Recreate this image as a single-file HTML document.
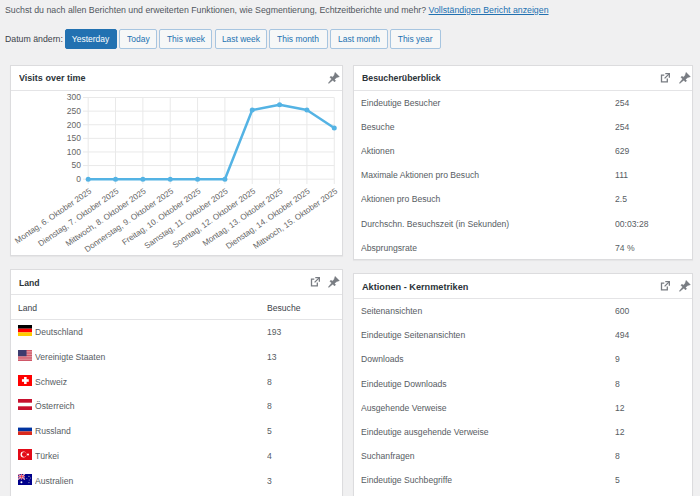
<!DOCTYPE html>
<html><head><meta charset="utf-8"><style>
html,body{margin:0;padding:0;}
body{width:700px;height:496px;overflow:hidden;background:#f0f0f1;font-family:"Liberation Sans",sans-serif;color:#3c434a;position:relative;font-size:8.7px;line-height:10px;}
.a{position:absolute;white-space:nowrap;}
.desc{left:5px;top:4px;color:#50575e;font-size:9.6px;line-height:12px;transform:scaleX(0.914);transform-origin:0 0;}
.desc a{color:#2271b1;text-decoration:underline;}
.lbl{left:5px;top:33.2px;color:#3c434a;font-size:9.6px;line-height:12px;transform:scaleX(0.912);transform-origin:0 0;}
.btn{position:absolute;top:28.7px;height:18.3px;border:1px solid #a7c5e0;border-radius:2px;background:#f6f7f7;color:#2271b1;box-sizing:content-box;text-align:center;line-height:18.3px;white-space:nowrap;}
.btn.p{background:#2271b1;border-color:#2271b1;color:#fff;}
.panel{position:absolute;background:#fff;border:1px solid #dcdcde;box-shadow:0 1px 1px rgba(0,0,0,.04);}
.hd{position:absolute;left:0;right:0;top:0;border-bottom:1px solid #e4e4e6;}
.ttl{position:absolute;white-space:nowrap;font-weight:bold;color:#2c3338;}
.t{position:absolute;white-space:nowrap;color:#575d63;font-size:8.6px;line-height:10px;}
.ic{position:absolute;}
</style></head><body>
<div class="a desc">Suchst du nach allen Berichten und erweiterten Funktionen, wie Segmentierung, Echtzeitberichte und mehr? <a>Vollständigen Bericht anzeigen</a></div>
<div class="a lbl">Datum ändern:</div>
<div class="btn p" style="left:65px;width:50px;"><span style="display:inline-block;font-size:9.3px;transform:scaleX(0.91);">Yesterday</span></div>
<div class="btn" style="left:119px;width:36px;"><span style="display:inline-block;font-size:9.3px;transform:scaleX(0.91);">Today</span></div>
<div class="btn" style="left:159px;width:51px;"><span style="display:inline-block;font-size:9.3px;transform:scaleX(0.91);">This week</span></div>
<div class="btn" style="left:214.5px;width:50.5px;"><span style="display:inline-block;font-size:9.3px;transform:scaleX(0.91);">Last week</span></div>
<div class="btn" style="left:269px;width:56.5px;"><span style="display:inline-block;font-size:9.3px;transform:scaleX(0.91);">This month</span></div>
<div class="btn" style="left:330px;width:56px;"><span style="display:inline-block;font-size:9.3px;transform:scaleX(0.91);">Last month</span></div>
<div class="btn" style="left:390px;width:48.60000000000002px;"><span style="display:inline-block;font-size:9.3px;transform:scaleX(0.91);">This year</span></div>
<div class="panel" style="left:10px;top:64.5px;width:330.5px;height:189.3px;"><div class="hd" style="height:24.1px;"></div></div>
<div class="ttl" style="left:18.8px;top:72.14px;font-size:9.7px;line-height:12px;transform:scaleX(0.93);transform-origin:0 0;">Visits over time</div>
<svg class="ic" style="left:327.6px;top:71.7px" width="12" height="12" viewBox="0 0 12 12"><path d="M0.25 11.05 L3.54 6.99 L1.84 5.29 L3.05 4.09 L4.18 5.22 L6.02 3.38 L7.08 0.34 L11.46 4.72 L8.42 5.78 L6.58 7.62 L7.71 8.75 L6.51 9.96 L4.81 8.26 L0.75 11.55 Z" fill="#787c82" stroke="#787c82" stroke-width="0.3" stroke-linejoin="round"/></svg>
<svg class="ic" style="left:0;top:0" width="700" height="496" viewBox="0 0 700 496"><line x1="88.20" y1="97.5" x2="88.20" y2="184" stroke="#e9e9e9" stroke-width="1"/><line x1="115.54" y1="97.5" x2="115.54" y2="184" stroke="#e9e9e9" stroke-width="1"/><line x1="142.88" y1="97.5" x2="142.88" y2="184" stroke="#e9e9e9" stroke-width="1"/><line x1="170.22" y1="97.5" x2="170.22" y2="184" stroke="#e9e9e9" stroke-width="1"/><line x1="197.56" y1="97.5" x2="197.56" y2="184" stroke="#e9e9e9" stroke-width="1"/><line x1="224.90" y1="97.5" x2="224.90" y2="184" stroke="#e9e9e9" stroke-width="1"/><line x1="252.24" y1="97.5" x2="252.24" y2="184" stroke="#e9e9e9" stroke-width="1"/><line x1="279.58" y1="97.5" x2="279.58" y2="184" stroke="#e9e9e9" stroke-width="1"/><line x1="306.92" y1="97.5" x2="306.92" y2="184" stroke="#e9e9e9" stroke-width="1"/><line x1="334.26" y1="97.5" x2="334.26" y2="184" stroke="#e9e9e9" stroke-width="1"/><line x1="83" y1="179.20" x2="334.26" y2="179.20" stroke="#e9e9e9" stroke-width="1"/><text x="81" y="182.10" text-anchor="end" font-size="8.5" fill="#666" font-family="Liberation Sans">0</text><line x1="83" y1="165.58" x2="334.26" y2="165.58" stroke="#e9e9e9" stroke-width="1"/><text x="81" y="168.48" text-anchor="end" font-size="8.5" fill="#666" font-family="Liberation Sans">50</text><line x1="83" y1="151.97" x2="334.26" y2="151.97" stroke="#e9e9e9" stroke-width="1"/><text x="81" y="154.87" text-anchor="end" font-size="8.5" fill="#666" font-family="Liberation Sans">100</text><line x1="83" y1="138.35" x2="334.26" y2="138.35" stroke="#e9e9e9" stroke-width="1"/><text x="81" y="141.25" text-anchor="end" font-size="8.5" fill="#666" font-family="Liberation Sans">150</text><line x1="83" y1="124.73" x2="334.26" y2="124.73" stroke="#e9e9e9" stroke-width="1"/><text x="81" y="127.63" text-anchor="end" font-size="8.5" fill="#666" font-family="Liberation Sans">200</text><line x1="83" y1="111.12" x2="334.26" y2="111.12" stroke="#e9e9e9" stroke-width="1"/><text x="81" y="114.02" text-anchor="end" font-size="8.5" fill="#666" font-family="Liberation Sans">250</text><line x1="83" y1="97.50" x2="334.26" y2="97.50" stroke="#e9e9e9" stroke-width="1"/><text x="81" y="100.40" text-anchor="end" font-size="8.5" fill="#666" font-family="Liberation Sans">300</text><polyline points="88.20,179.20 115.54,179.20 142.88,179.20 170.22,179.20 197.56,179.20 224.90,179.20 252.24,110.03 279.58,104.85 306.92,110.03 334.26,128.00" fill="none" stroke="#54b3e4" stroke-width="2.5" stroke-linejoin="round"/><circle cx="88.20" cy="179.20" r="2.5" fill="#54b3e4"/><circle cx="115.54" cy="179.20" r="2.5" fill="#54b3e4"/><circle cx="142.88" cy="179.20" r="2.5" fill="#54b3e4"/><circle cx="170.22" cy="179.20" r="2.5" fill="#54b3e4"/><circle cx="197.56" cy="179.20" r="2.5" fill="#54b3e4"/><circle cx="224.90" cy="179.20" r="2.5" fill="#54b3e4"/><circle cx="252.24" cy="110.03" r="2.5" fill="#54b3e4"/><circle cx="279.58" cy="104.85" r="2.5" fill="#54b3e4"/><circle cx="306.92" cy="110.03" r="2.5" fill="#54b3e4"/><circle cx="334.26" cy="128.00" r="2.5" fill="#54b3e4"/><text transform="translate(90.20,190) rotate(-34.6)" text-anchor="end" font-size="8.2" fill="#666" font-family="Liberation Sans" dy="3">Montag, 6. Oktober 2025</text><text transform="translate(117.54,190) rotate(-34.6)" text-anchor="end" font-size="8.2" fill="#666" font-family="Liberation Sans" dy="3">Dienstag, 7. Oktober 2025</text><text transform="translate(144.88,190) rotate(-34.6)" text-anchor="end" font-size="8.2" fill="#666" font-family="Liberation Sans" dy="3">Mittwoch, 8. Oktober 2025</text><text transform="translate(172.22,190) rotate(-34.6)" text-anchor="end" font-size="8.2" fill="#666" font-family="Liberation Sans" dy="3">Donnerstag, 9. Oktober 2025</text><text transform="translate(199.56,190) rotate(-34.6)" text-anchor="end" font-size="8.2" fill="#666" font-family="Liberation Sans" dy="3">Freitag, 10. Oktober 2025</text><text transform="translate(226.90,190) rotate(-34.6)" text-anchor="end" font-size="8.2" fill="#666" font-family="Liberation Sans" dy="3">Samstag, 11. Oktober 2025</text><text transform="translate(254.24,190) rotate(-34.6)" text-anchor="end" font-size="8.2" fill="#666" font-family="Liberation Sans" dy="3">Sonntag, 12. Oktober 2025</text><text transform="translate(281.58,190) rotate(-34.6)" text-anchor="end" font-size="8.2" fill="#666" font-family="Liberation Sans" dy="3">Montag, 13. Oktober 2025</text><text transform="translate(308.92,190) rotate(-34.6)" text-anchor="end" font-size="8.2" fill="#666" font-family="Liberation Sans" dy="3">Dienstag, 14. Oktober 2025</text><text transform="translate(336.26,190) rotate(-34.6)" text-anchor="end" font-size="8.2" fill="#666" font-family="Liberation Sans" dy="3">Mittwoch, 15. Oktober 2025</text></svg>
<div class="panel" style="left:353.4px;top:64.5px;width:337.30000000000007px;height:193.3px;"><div class="hd" style="height:24.3px;"></div></div>
<div class="ttl" style="left:362.2px;top:72.14px;font-size:9.7px;line-height:12px;transform:scaleX(0.902);transform-origin:0 0;">Besucherüberblick</div>
<svg class="ic" style="left:660.1px;top:72.5px" width="10" height="10" viewBox="0 0 10 10"><path d="M4.3 2.2 H1.5 V8.85 H7.3 V5.6" fill="none" stroke="#787c82" stroke-width="1.3"/><path d="M5.3 0.65 H9.35 V4.7" fill="none" stroke="#787c82" stroke-width="1.3"/><path d="M9.1 0.9 L4.6 5.4" stroke="#787c82" stroke-width="1.3"/></svg>
<svg class="ic" style="left:678.6px;top:71.5px" width="12" height="12" viewBox="0 0 12 12"><path d="M0.25 11.05 L3.54 6.99 L1.84 5.29 L3.05 4.09 L4.18 5.22 L6.02 3.38 L7.08 0.34 L11.46 4.72 L8.42 5.78 L6.58 7.62 L7.71 8.75 L6.51 9.96 L4.81 8.26 L0.75 11.55 Z" fill="#787c82" stroke="#787c82" stroke-width="0.3" stroke-linejoin="round"/></svg>
<div class="t" style="left:360.8px;top:96.67px;font-size:9.6px;line-height:12px;transform:scaleX(0.896);transform-origin:0 0;">Eindeutige Besucher</div>
<div class="t" style="left:614.6px;top:96.67px;font-size:9.6px;line-height:12px;transform:scaleX(0.896);transform-origin:0 0;">254</div>
<div class="t" style="left:360.8px;top:120.85px;font-size:9.6px;line-height:12px;transform:scaleX(0.896);transform-origin:0 0;">Besuche</div>
<div class="t" style="left:614.6px;top:120.85px;font-size:9.6px;line-height:12px;transform:scaleX(0.896);transform-origin:0 0;">254</div>
<div class="t" style="left:360.8px;top:145.03px;font-size:9.6px;line-height:12px;transform:scaleX(0.896);transform-origin:0 0;">Aktionen</div>
<div class="t" style="left:614.6px;top:145.03px;font-size:9.6px;line-height:12px;transform:scaleX(0.896);transform-origin:0 0;">629</div>
<div class="t" style="left:360.8px;top:169.21px;font-size:9.6px;line-height:12px;transform:scaleX(0.896);transform-origin:0 0;">Maximale Aktionen pro Besuch</div>
<div class="t" style="left:614.6px;top:169.21px;font-size:9.6px;line-height:12px;transform:scaleX(0.896);transform-origin:0 0;">111</div>
<div class="t" style="left:360.8px;top:193.39px;font-size:9.6px;line-height:12px;transform:scaleX(0.896);transform-origin:0 0;">Aktionen pro Besuch</div>
<div class="t" style="left:614.6px;top:193.39px;font-size:9.6px;line-height:12px;transform:scaleX(0.896);transform-origin:0 0;">2.5</div>
<div class="t" style="left:360.8px;top:217.57px;font-size:9.6px;line-height:12px;transform:scaleX(0.896);transform-origin:0 0;">Durchschn. Besuchszeit (in Sekunden)</div>
<div class="t" style="left:614.6px;top:217.57px;font-size:9.6px;line-height:12px;transform:scaleX(0.896);transform-origin:0 0;">00:03:28</div>
<div class="t" style="left:360.8px;top:241.75px;font-size:9.6px;line-height:12px;transform:scaleX(0.896);transform-origin:0 0;">Absprungsrate</div>
<div class="t" style="left:614.6px;top:241.75px;font-size:9.6px;line-height:12px;transform:scaleX(0.896);transform-origin:0 0;">74 %</div>
<div class="panel" style="left:10px;top:269px;width:330.5px;height:249px;"><div class="hd" style="height:24.2px;"></div></div>
<div class="ttl" style="left:18.8px;top:276.64px;font-size:9.7px;line-height:12px;transform:scaleX(0.89);transform-origin:0 0;">Land</div>
<svg class="ic" style="left:310px;top:277.1px" width="10" height="10" viewBox="0 0 10 10"><path d="M4.3 2.2 H1.5 V8.85 H7.3 V5.6" fill="none" stroke="#787c82" stroke-width="1.3"/><path d="M5.3 0.65 H9.35 V4.7" fill="none" stroke="#787c82" stroke-width="1.3"/><path d="M9.1 0.9 L4.6 5.4" stroke="#787c82" stroke-width="1.3"/></svg>
<svg class="ic" style="left:327.8px;top:275.5px" width="12" height="12" viewBox="0 0 12 12"><path d="M0.25 11.05 L3.54 6.99 L1.84 5.29 L3.05 4.09 L4.18 5.22 L6.02 3.38 L7.08 0.34 L11.46 4.72 L8.42 5.78 L6.58 7.62 L7.71 8.75 L6.51 9.96 L4.81 8.26 L0.75 11.55 Z" fill="#787c82" stroke="#787c82" stroke-width="0.3" stroke-linejoin="round"/></svg>
<div style="position:absolute;left:11px;top:319px;width:330.5px;height:1px;background:#e4e4e6"></div>
<div class="t" style="left:17.6px;top:301.77px;font-size:9.6px;line-height:12px;transform:scaleX(0.896);transform-origin:0 0;color:#3c434a">Land</div>
<div class="t" style="left:266.6px;top:301.77px;font-size:9.6px;line-height:12px;transform:scaleX(0.896);transform-origin:0 0;color:#3c434a">Besuche</div>
<svg class="ic" style="left:17.6px;top:325.10px" width="14.7" height="11" viewBox="0 0 15 11" preserveAspectRatio="none"><rect width="15" height="3.7" fill="#000"/><rect y="3.7" width="15" height="3.7" fill="#ff0000"/><rect y="7.4" width="15" height="3.6" fill="#ffcc00"/></svg>
<div class="t" style="left:34.6px;top:325.97px;font-size:9.6px;line-height:12px;transform:scaleX(0.896);transform-origin:0 0;">Deutschland</div>
<div class="t" style="left:266.6px;top:325.97px;font-size:9.6px;line-height:12px;transform:scaleX(0.896);transform-origin:0 0;">193</div>
<svg class="ic" style="left:17.6px;top:349.88px" width="14.7" height="11" viewBox="0 0 15 11" preserveAspectRatio="none"><rect width="15" height="11" fill="#e4a5ad"/><rect y="0.00" width="15" height="0.85" fill="#cc4a5c"/><rect y="1.69" width="15" height="0.85" fill="#cc4a5c"/><rect y="3.38" width="15" height="0.85" fill="#cc4a5c"/><rect y="5.07" width="15" height="0.85" fill="#cc4a5c"/><rect y="6.76" width="15" height="0.85" fill="#cc4a5c"/><rect y="8.45" width="15" height="0.85" fill="#cc4a5c"/><rect y="10.14" width="15" height="0.85" fill="#cc4a5c"/><rect width="8.7" height="6.2" fill="#3c3b6e"/></svg>
<div class="t" style="left:34.6px;top:350.75px;font-size:9.6px;line-height:12px;transform:scaleX(0.896);transform-origin:0 0;">Vereinigte Staaten</div>
<div class="t" style="left:266.6px;top:350.75px;font-size:9.6px;line-height:12px;transform:scaleX(0.896);transform-origin:0 0;">13</div>
<svg class="ic" style="left:17.6px;top:374.66px" width="14.7" height="11" viewBox="0 0 15 11" preserveAspectRatio="none"><rect width="15" height="11" fill="#ff0000"/><rect x="6.2" y="2.0" width="2.6" height="7" fill="#fff"/><rect x="4.0" y="4.2" width="7" height="2.6" fill="#fff"/></svg>
<div class="t" style="left:34.6px;top:375.53px;font-size:9.6px;line-height:12px;transform:scaleX(0.896);transform-origin:0 0;">Schweiz</div>
<div class="t" style="left:266.6px;top:375.53px;font-size:9.6px;line-height:12px;transform:scaleX(0.896);transform-origin:0 0;">8</div>
<svg class="ic" style="left:17.6px;top:399.44px" width="14.7" height="11" viewBox="0 0 15 11" preserveAspectRatio="none"><rect width="15" height="3.7" fill="#c8102e"/><rect y="7.3" width="15" height="3.7" fill="#c8102e"/></svg>
<div class="t" style="left:34.6px;top:400.31px;font-size:9.6px;line-height:12px;transform:scaleX(0.896);transform-origin:0 0;">Österreich</div>
<div class="t" style="left:266.6px;top:400.31px;font-size:9.6px;line-height:12px;transform:scaleX(0.896);transform-origin:0 0;">8</div>
<svg class="ic" style="left:17.6px;top:424.22px" width="14.7" height="11" viewBox="0 0 15 11" preserveAspectRatio="none"><rect y="3.6" width="15" height="3.8" fill="#0033a0"/><rect y="7.4" width="15" height="3.6" fill="#da291c"/></svg>
<div class="t" style="left:34.6px;top:425.09px;font-size:9.6px;line-height:12px;transform:scaleX(0.896);transform-origin:0 0;">Russland</div>
<div class="t" style="left:266.6px;top:425.09px;font-size:9.6px;line-height:12px;transform:scaleX(0.896);transform-origin:0 0;">5</div>
<svg class="ic" style="left:17.6px;top:449.00px" width="14.7" height="11" viewBox="0 0 15 11" preserveAspectRatio="none"><rect width="15" height="11" fill="#e30a17"/><circle cx="5.6" cy="5.5" r="3" fill="#fff"/><circle cx="6.4" cy="5.5" r="2.4" fill="#e30a17"/><circle cx="10.2" cy="5.5" r="1.1" fill="#fff"/></svg>
<div class="t" style="left:34.6px;top:449.87px;font-size:9.6px;line-height:12px;transform:scaleX(0.896);transform-origin:0 0;">Türkei</div>
<div class="t" style="left:266.6px;top:449.87px;font-size:9.6px;line-height:12px;transform:scaleX(0.896);transform-origin:0 0;">4</div>
<svg class="ic" style="left:17.6px;top:473.78px" width="14.7" height="11" viewBox="0 0 15 11" preserveAspectRatio="none"><rect width="15" height="11" fill="#00008b"/><rect width="7" height="5.5" fill="#00008b"/><path d="M0 0 L7 5.5 M7 0 L0 5.5" stroke="#fff" stroke-width="1.2"/><path d="M0 0 L7 5.5 M7 0 L0 5.5" stroke="#e8112d" stroke-width="0.5"/><rect x="2.9" width="1.2" height="5.5" fill="#fff"/><rect y="2.15" width="7" height="1.2" fill="#fff"/><rect x="3.15" width="0.7" height="5.5" fill="#e8112d"/><rect y="2.4" width="7" height="0.7" fill="#e8112d"/><circle cx="3.5" cy="8.3" r="1" fill="#fff"/><circle cx="11.2" cy="2.4" r="0.6" fill="#aab"/><circle cx="9" cy="4.4" r="0.5" fill="#aab"/><circle cx="12.8" cy="4" r="0.5" fill="#aab"/><circle cx="11.5" cy="6" r="0.5" fill="#aab"/><circle cx="11.2" cy="8.6" r="0.6" fill="#aab"/></svg>
<div class="t" style="left:34.6px;top:474.65px;font-size:9.6px;line-height:12px;transform:scaleX(0.896);transform-origin:0 0;">Australien</div>
<div class="t" style="left:266.6px;top:474.65px;font-size:9.6px;line-height:12px;transform:scaleX(0.896);transform-origin:0 0;">3</div>
<div class="panel" style="left:353.4px;top:273px;width:337.30000000000007px;height:245px;"><div class="hd" style="height:23.8px;"></div></div>
<div class="ttl" style="left:362.2px;top:280.64px;font-size:9.7px;line-height:12px;transform:scaleX(0.945);transform-origin:0 0;">Aktionen - Kernmetriken</div>
<svg class="ic" style="left:659.9px;top:281px" width="10" height="10" viewBox="0 0 10 10"><path d="M4.3 2.2 H1.5 V8.85 H7.3 V5.6" fill="none" stroke="#787c82" stroke-width="1.3"/><path d="M5.3 0.65 H9.35 V4.7" fill="none" stroke="#787c82" stroke-width="1.3"/><path d="M9.1 0.9 L4.6 5.4" stroke="#787c82" stroke-width="1.3"/></svg>
<svg class="ic" style="left:678.8px;top:279.8px" width="12" height="12" viewBox="0 0 12 12"><path d="M0.25 11.05 L3.54 6.99 L1.84 5.29 L3.05 4.09 L4.18 5.22 L6.02 3.38 L7.08 0.34 L11.46 4.72 L8.42 5.78 L6.58 7.62 L7.71 8.75 L6.51 9.96 L4.81 8.26 L0.75 11.55 Z" fill="#787c82" stroke="#787c82" stroke-width="0.3" stroke-linejoin="round"/></svg>
<div class="t" style="left:360.8px;top:305.07px;font-size:9.6px;line-height:12px;transform:scaleX(0.896);transform-origin:0 0;">Seitenansichten</div>
<div class="t" style="left:614.6px;top:305.07px;font-size:9.6px;line-height:12px;transform:scaleX(0.896);transform-origin:0 0;">600</div>
<div class="t" style="left:360.8px;top:329.25px;font-size:9.6px;line-height:12px;transform:scaleX(0.896);transform-origin:0 0;">Eindeutige Seitenansichten</div>
<div class="t" style="left:614.6px;top:329.25px;font-size:9.6px;line-height:12px;transform:scaleX(0.896);transform-origin:0 0;">494</div>
<div class="t" style="left:360.8px;top:353.43px;font-size:9.6px;line-height:12px;transform:scaleX(0.896);transform-origin:0 0;">Downloads</div>
<div class="t" style="left:614.6px;top:353.43px;font-size:9.6px;line-height:12px;transform:scaleX(0.896);transform-origin:0 0;">9</div>
<div class="t" style="left:360.8px;top:377.61px;font-size:9.6px;line-height:12px;transform:scaleX(0.896);transform-origin:0 0;">Eindeutige Downloads</div>
<div class="t" style="left:614.6px;top:377.61px;font-size:9.6px;line-height:12px;transform:scaleX(0.896);transform-origin:0 0;">8</div>
<div class="t" style="left:360.8px;top:401.79px;font-size:9.6px;line-height:12px;transform:scaleX(0.896);transform-origin:0 0;">Ausgehende Verweise</div>
<div class="t" style="left:614.6px;top:401.79px;font-size:9.6px;line-height:12px;transform:scaleX(0.896);transform-origin:0 0;">12</div>
<div class="t" style="left:360.8px;top:425.97px;font-size:9.6px;line-height:12px;transform:scaleX(0.896);transform-origin:0 0;">Eindeutige ausgehende Verweise</div>
<div class="t" style="left:614.6px;top:425.97px;font-size:9.6px;line-height:12px;transform:scaleX(0.896);transform-origin:0 0;">12</div>
<div class="t" style="left:360.8px;top:450.15px;font-size:9.6px;line-height:12px;transform:scaleX(0.896);transform-origin:0 0;">Suchanfragen</div>
<div class="t" style="left:614.6px;top:450.15px;font-size:9.6px;line-height:12px;transform:scaleX(0.896);transform-origin:0 0;">8</div>
<div class="t" style="left:360.8px;top:474.33px;font-size:9.6px;line-height:12px;transform:scaleX(0.896);transform-origin:0 0;">Eindeutige Suchbegriffe</div>
<div class="t" style="left:614.6px;top:474.33px;font-size:9.6px;line-height:12px;transform:scaleX(0.896);transform-origin:0 0;">5</div>
</body></html>
